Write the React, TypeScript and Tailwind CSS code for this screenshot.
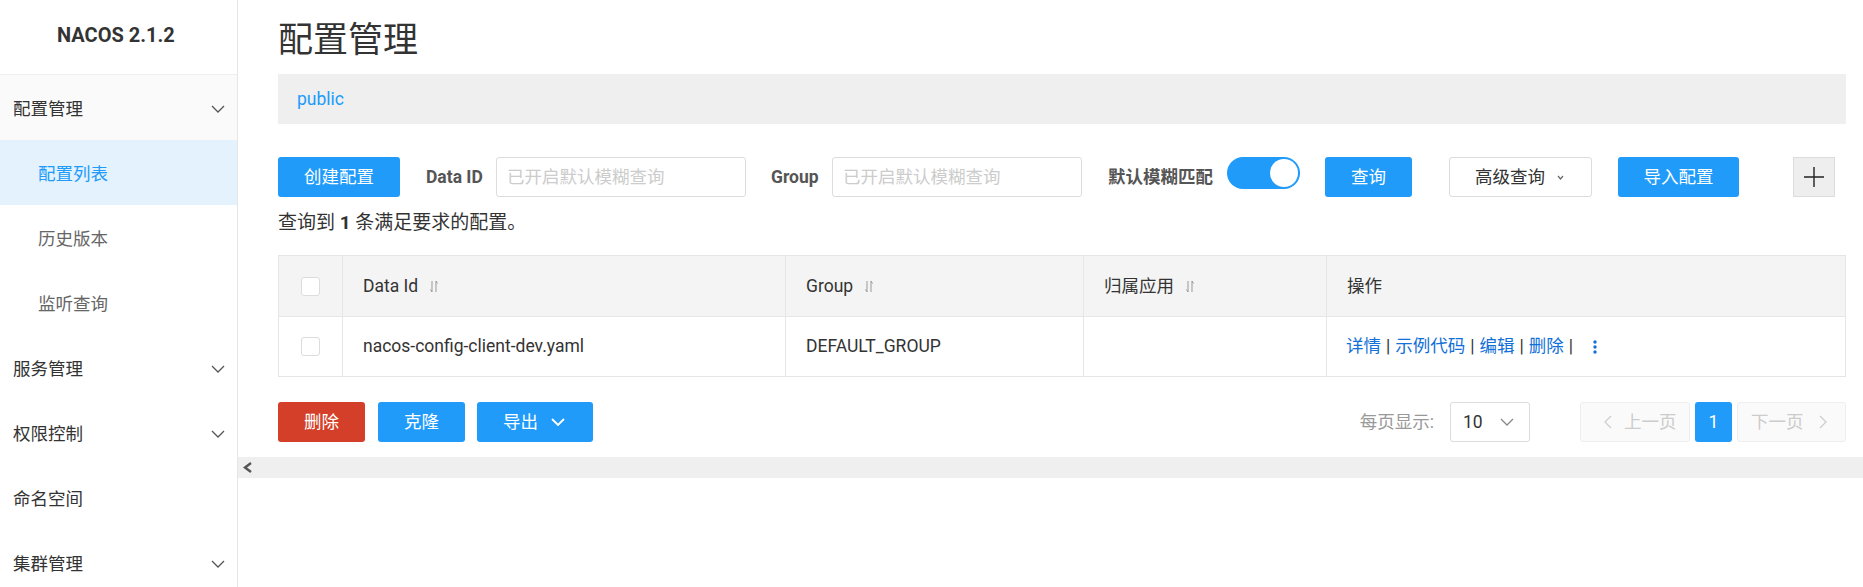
import React from 'react';

function Chevron({ w = 14, h = 8, stroke = 1.3, className = '' }: { w?: number; h?: number; stroke?: number; className?: string }) {
  return (
    <svg width={w} height={h} viewBox={`0 0 ${w} ${h}`} fill="none" className={className}>
      <polyline points={`1,1 ${w / 2},${h - 1} ${w - 1},1`} stroke="currentColor" strokeWidth={stroke} />
    </svg>
  );
}

function SideChevron({ dir, className = '' }: { dir: 'left' | 'right'; className?: string }) {
  const pts = dir === 'left' ? '7,1 1,7 7,13' : '1,1 7,7 1,13';
  return (
    <svg width="8" height="14" viewBox="0 0 8 14" fill="none" className={className}>
      <polyline points={pts} stroke="currentColor" strokeWidth="1.2" />
    </svg>
  );
}

function SortIcon() {
  return (
    <svg width="8" height="13" viewBox="0 0 8 13" fill="none" stroke="#999" strokeWidth="1" className="ml-[12px]">
      <path d="M2 1v11M0.5 9.5L2 12" />
      <path d="M6 12V1M6 1l1.5 2.5" />
    </svg>
  );
}

function Checkbox() {
  return <div className="w-[19px] h-[19px] rounded-[3px] border border-[#dcdcdc] bg-white" />;
}

function MenuGroup({ label, hasChildren = true, bg = false }: { label: string; hasChildren?: boolean; bg?: boolean }) {
  return (
    <div className={`h-[65px] shrink-0 flex items-center justify-between pl-[13px] pr-[12px] pt-[3px] text-[17.5px] text-[#333] ${bg ? 'bg-[#fafafa]' : ''}`}>
      <span>{label}</span>
      {hasChildren && <Chevron className="text-[#555]" />}
    </div>
  );
}

function SubItem({ label, active = false }: { label: string; active?: boolean }) {
  return (
    <div className={`h-[65px] shrink-0 flex items-center pl-[38px] pt-[3px] text-[17.5px] ${active ? 'bg-[#e3f2fd] text-[#209bfa]' : 'text-[#666]'}`}>
      {label}
    </div>
  );
}

export default function App() {
  return (
    <div className="flex h-[587px] w-full overflow-hidden bg-white text-[#333] font-['Roboto','Noto_Sans_CJK_SC',sans-serif]">
      {/* Sidebar */}
      <aside className="w-[238px] shrink-0 border-r border-[#e6e6e6] flex flex-col overflow-hidden">
        <div className="h-[75px] shrink-0 border-b border-[#eeeeee] flex items-center pl-[57px] pb-[5px] text-[20px] font-bold text-[#333]">
          NACOS 2.1.2
        </div>
        <MenuGroup label="配置管理" bg />
        <SubItem label="配置列表" active />
        <SubItem label="历史版本" />
        <SubItem label="监听查询" />
        <MenuGroup label="服务管理" />
        <MenuGroup label="权限控制" />
        <MenuGroup label="命名空间" hasChildren={false} />
        <MenuGroup label="集群管理" />
      </aside>

      {/* Main */}
      <main className="flex-1 min-w-0 flex flex-col">
        <div className="pl-[40px] pr-[17px]">
          <h1 className="pt-[16px] leading-[50px] text-[35px] font-normal text-[#333]">配置管理</h1>

          <div className="mt-[8px] h-[50px] bg-[#efefef] flex items-center px-[19px]">
            <span className="text-[17.5px] text-[#209bfa]">public</span>
          </div>

          {/* Toolbar */}
          <div className="mt-[33px] h-[40px] flex items-center whitespace-nowrap">
            <button className="w-[122px] h-[40px] rounded-[3px] bg-[#209bfa] text-white text-[17.5px]">创建配置</button>
            <span className="ml-[26px] w-[54px] text-[17.5px] font-bold text-[#555]">Data ID</span>
            <div className="ml-[16px] w-[250px] h-[40px] rounded-[3px] border border-[#dcdcdc] flex items-center pl-[10px] text-[17.5px] text-[#cccccc]">
              已开启默认模糊查询
            </div>
            <span className="ml-[25px] w-[46px] text-[17.5px] font-bold text-[#555]">Group</span>
            <div className="ml-[15px] w-[250px] h-[40px] rounded-[3px] border border-[#dcdcdc] flex items-center pl-[10px] text-[17.5px] text-[#cccccc]">
              已开启默认模糊查询
            </div>
            <span className="ml-[26px] w-[104px] text-[17.5px] font-bold text-[#555]">默认模糊匹配</span>
            <div className="ml-[15px] self-start w-[73px] h-[32px] rounded-full bg-[#209bfa] flex items-center justify-end pr-[2px]">
              <div className="w-[28px] h-[28px] rounded-full bg-white" />
            </div>
            <button className="ml-[25px] w-[87px] h-[40px] rounded-[3px] bg-[#209bfa] text-white text-[17.5px]">查询</button>
            <button className="ml-[37px] w-[143px] h-[40px] rounded-[3px] border border-[#dcdcdc] bg-white flex items-center pl-[25px] text-[17.5px] text-[#333]">
              高级查询
              <Chevron w={7} h={5} stroke={1.2} className="ml-[12px] text-[#666]" />
            </button>
            <button className="ml-[26px] w-[121px] h-[40px] rounded-[3px] bg-[#209bfa] text-white text-[17.5px]">导入配置</button>
            <button className="ml-[54px] w-[42px] h-[40px] border border-[#dcdcdc] bg-[#eeeeee] flex items-center justify-center">
              <svg width="22" height="22" viewBox="0 0 22 22" stroke="#222" strokeWidth="1.4">
                <path d="M11 1v20M1 11h20" />
              </svg>
            </button>
          </div>

          <p className="mt-[13px] leading-[25px] text-[19px] text-[#333]">
            查询到 <strong className="font-bold">1</strong> 条满足要求的配置。
          </p>

          {/* Table */}
          <div className="mt-[20px] border border-[#e6e6e6] text-[17.5px] text-[#333]">
            <div className="grid grid-cols-[64px_443px_298px_243px_1fr] h-[61px] bg-[#f4f4f4] border-b border-[#e6e6e6]">
              <div className="border-r border-[#e6e6e6] flex items-center justify-center"><Checkbox /></div>
              <div className="border-r border-[#e6e6e6] flex items-center pl-[20px]">Data Id<SortIcon /></div>
              <div className="border-r border-[#e6e6e6] flex items-center pl-[20px]">Group<SortIcon /></div>
              <div className="border-r border-[#e6e6e6] flex items-center pl-[20px]">归属应用<SortIcon /></div>
              <div className="flex items-center pl-[20px]">操作</div>
            </div>
            <div className="grid grid-cols-[64px_443px_298px_243px_1fr] h-[59px]">
              <div className="border-r border-[#e6e6e6] flex items-center justify-center"><Checkbox /></div>
              <div className="border-r border-[#e6e6e6] flex items-center pl-[20px]">nacos-config-client-dev.yaml</div>
              <div className="border-r border-[#e6e6e6] flex items-center pl-[20px]">DEFAULT_GROUP</div>
              <div className="border-r border-[#e6e6e6]" />
              <div className="flex items-center pl-[19px] text-[#1270d8] whitespace-nowrap">
                <span>详情</span>
                <span className="mx-[5px] text-[#333]">|</span>
                <span>示例代码</span>
                <span className="mx-[5px] text-[#333]">|</span>
                <span>编辑</span>
                <span className="mx-[5px] text-[#333]">|</span>
                <span>删除</span>
                <span className="mx-[5px] text-[#333]">|</span>
                <svg width="6" height="16" viewBox="0 0 6 16" className="ml-[14px]" fill="#1270d8">
                  <circle cx="3" cy="3" r="1.7" />
                  <circle cx="3" cy="8" r="1.7" />
                  <circle cx="3" cy="13" r="1.7" />
                </svg>
              </div>
            </div>
          </div>

          {/* Bottom actions + pagination */}
          <div className="mt-[25px] h-[40px] flex items-center whitespace-nowrap">
            <button className="w-[87px] h-[40px] rounded-[3px] bg-[#d33f28] text-white text-[17.5px]">删除</button>
            <button className="ml-[13px] w-[87px] h-[40px] rounded-[3px] bg-[#209bfa] text-white text-[17.5px]">克隆</button>
            <button className="ml-[12px] w-[116px] h-[40px] rounded-[3px] bg-[#209bfa] text-white text-[17.5px] flex items-center pl-[26px]">
              导出
              <Chevron w={14} h={8} stroke={1.8} className="ml-[13px] text-white" />
            </button>

            <div className="ml-auto flex items-center">
              <span className="text-[17.5px] text-[#999]">每页显示:</span>
              <div className="ml-[16px] w-[80px] h-[40px] rounded-[3px] border border-[#dcdcdc] flex items-center justify-between pl-[12px] pr-[15px]">
                <span className="text-[17.5px] text-[#333]">10</span>
                <Chevron w={14} h={8} stroke={1.3} className="text-[#888]" />
              </div>
              <div className="ml-[50px] w-[110px] h-[40px] rounded-[3px] border border-[#eeeeee] bg-[#fafafa] flex items-center pl-[23px] text-[#cccccc] text-[17.5px]">
                <SideChevron dir="left" />
                <span className="ml-[12px]">上一页</span>
              </div>
              <div className="ml-[5px] w-[37px] h-[40px] rounded-[3px] bg-[#209bfa] flex items-center justify-center text-white text-[17.5px]">1</div>
              <div className="ml-[5px] w-[109px] h-[40px] rounded-[3px] border border-[#eeeeee] bg-[#fafafa] flex items-center pl-[13px] text-[#cccccc] text-[17.5px]">
                <span>下一页</span>
                <SideChevron dir="right" className="ml-[15px]" />
              </div>
            </div>
          </div>
        </div>

        {/* Horizontal scroll strip */}
        <div className="mt-[15px] h-[21px] bg-[#efefef] flex items-center pl-[5px]">
          <svg width="10" height="11" viewBox="0 0 10 11" fill="none">
            <polyline points="8,1 2,5.5 8,10" stroke="#555" strokeWidth="2.4" />
          </svg>
        </div>
      </main>
    </div>
  );
}
